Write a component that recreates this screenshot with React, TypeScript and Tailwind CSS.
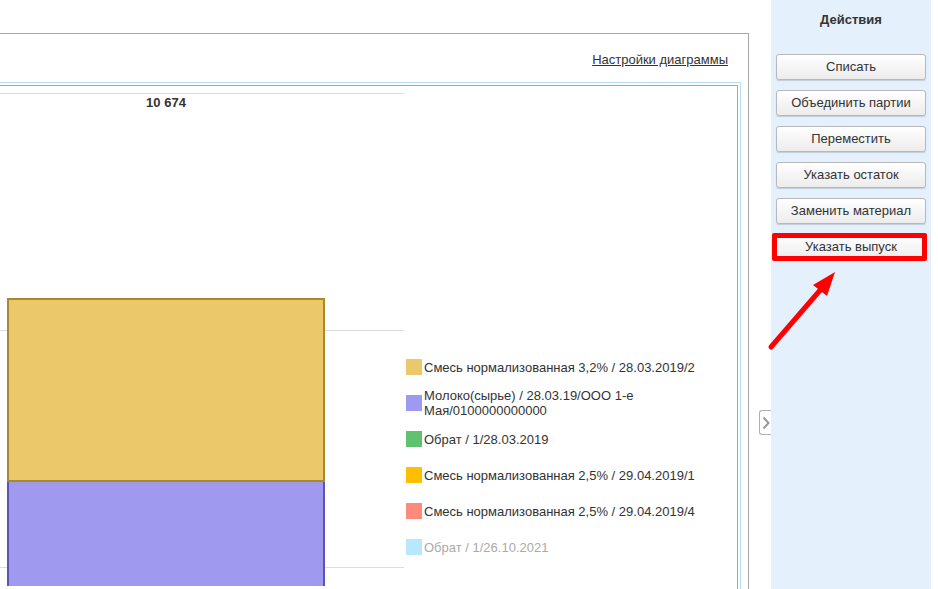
const actions = ['Списать', 'Объединить партии', 'Переместить', 'Указать остаток', 'Заменить материал'];

const legend = [
  { color: 'bg-[#ebc96a]', text: 'Смесь нормализованная 3,2% / 28.03.2019/2', muted: false },
  { color: 'bg-[#9f99f0]', text: 'Молоко(сырье) / 28.03.19/ООО 1-е Мая/0100000000000', muted: false },
  { color: 'bg-[#5ec26f]', text: 'Обрат / 1/28.03.2019', muted: false },
  { color: 'bg-[#fdbf00]', text: 'Смесь нормализованная 2,5% / 29.04.2019/1', muted: false },
  { color: 'bg-[#fe8a7c]', text: 'Смесь нормализованная 2,5% / 29.04.2019/4', muted: false },
  { color: 'bg-[#b7e8fb]', text: 'Обрат / 1/26.10.2021', muted: true },
];

function ActionButton({ label }: { label: string }) {
  return (
    <button className="w-[150px] h-[26px] rounded-[3px] border border-[#b8b8b8] bg-gradient-to-b from-white to-[#ececec] shadow-[0_1px_1px_rgba(0,0,0,0.15)] text-[13px] text-[#333]">
      {label}
    </button>
  );
}

export default function App() {
  return (
    <div className="relative flex w-[938px] h-[589px] overflow-hidden bg-white font-['Liberation_Sans',Arial,sans-serif] text-[#333]">
      {/* Chart area */}
      <div className="w-[771px] h-full pt-[33px]">
        <div className="w-[749px] h-full border-t border-r border-[#a8a8a8] flex flex-col">
          <div className="h-[48px] flex justify-end items-start pt-[18px] pr-[20px]">
            <a className="text-[13px] leading-[15px] underline text-[#333] cursor-pointer">Настройки диаграммы</a>
          </div>
          <div className="flex-1 mr-[7px] border-t border-r border-[#b9dcf5] pt-[2px] pr-[2px]">
            <div className="h-full border-t border-r border-[#a8a8a8] flex">
              <svg width="406" height="500" className="shrink-0">
                <line x1="0" y1="7.5" x2="404" y2="7.5" stroke="#dcdcdc" strokeWidth="1" />
                <line x1="0" y1="244.5" x2="404" y2="244.5" stroke="#dcdcdc" strokeWidth="1" />
                <line x1="0" y1="481.5" x2="404" y2="481.5" stroke="#dcdcdc" strokeWidth="1" />
                <text x="166" y="21" textAnchor="middle" fontSize="13" fontWeight="bold" fill="#333">10 674</text>
                <rect x="8" y="395" width="316" height="120" fill="#9f99f0" stroke="#5b54b3" strokeWidth="2" />
                <rect x="8" y="213" width="316" height="182" fill="#ebc96a" stroke="#a88a2c" strokeWidth="2" />
              </svg>
              <div className="flex flex-col pt-[263px]">
                {legend.map((l) => (
                  <div key={l.text} className="h-[36px] flex items-center">
                    <div className={`w-4 h-4 shrink-0 ${l.color}`} />
                    <span className={`ml-[2px] max-w-[285px] text-[13px] leading-[15px] ${l.muted ? 'text-[#aaa]' : 'text-[#333]'}`}>
                      {l.text}
                    </span>
                  </div>
                ))}
              </div>
            </div>
          </div>
        </div>
      </div>

      {/* Actions panel */}
      <div className="w-[160px] h-full bg-[#e4f0fc] flex flex-col items-center">
        <div className="pt-[12px] text-[13px] leading-[15px] font-bold text-[#333]">Действия</div>
        <div className="mt-[27px] flex flex-col gap-[10px]">
          {actions.map((a) => (
            <ActionButton key={a} label={a} />
          ))}
          <div className="relative">
            <ActionButton label="Указать выпуск" />
            <div className="absolute left-[-4px] top-[-1px] w-[155px] h-[28px] border-[5px] border-[#ff0000] rounded-[2px]" />
          </div>
        </div>
      </div>

      {/* Collapse toggle */}
      <div className="absolute left-[759px] top-[410px] w-[12px] h-[25px] bg-white border border-r-0 border-[#b0b0b0] rounded-l-[3px] flex items-center justify-center">
        <svg width="8" height="14" viewBox="0 0 8 14">
          <path d="M1.5 1.5 L6.5 7 L1.5 12.5" fill="none" stroke="#999" strokeWidth="2" />
        </svg>
      </div>

      {/* Annotation arrow */}
      <svg className="absolute left-0 top-0 pointer-events-none" width="938" height="589">
        <line x1="771" y1="347" x2="822" y2="288" stroke="#ff0000" strokeWidth="5" strokeLinecap="round" />
        <polygon points="835,272 813,285 827,296" fill="#ff0000" />
      </svg>
    </div>
  );
}
